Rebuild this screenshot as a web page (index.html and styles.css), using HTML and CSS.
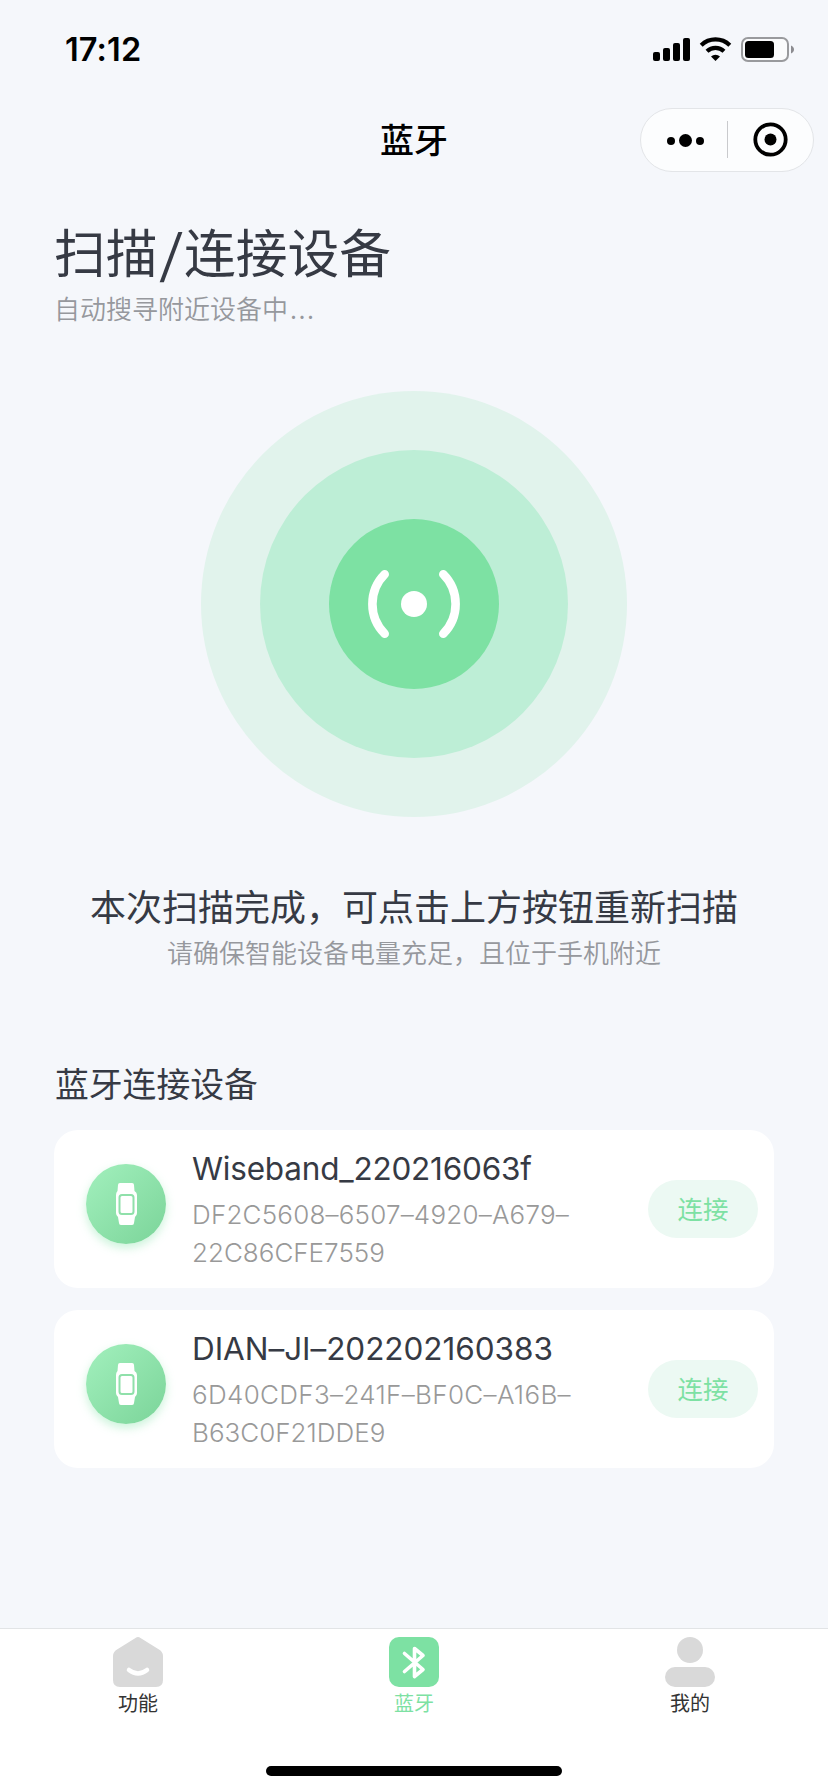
FILE: index.html
```html
<!DOCTYPE html>
<html lang="zh-CN">
<head>
<meta charset="utf-8">
<title>蓝牙</title>
<link rel="stylesheet" href="styles.css">
</head>
<body>
<div class="screen">
  <header class="status">
    <span class="clock">17:12</span>
    <svg class="status-icons" width="142" height="26" viewBox="0 0 142 26">
      <rect x="0" y="15" width="7" height="9" rx="2"/>
      <rect x="10" y="11" width="7" height="13" rx="2"/>
      <rect x="20" y="6" width="7" height="18" rx="2"/>
      <rect x="30" y="1" width="7" height="23" rx="2"/>
      <g fill="none" stroke="#000" stroke-width="4.2">
        <path d="M48.2 8.2a20.6 20.6 0 0 1 28.6 0"/>
        <path d="M54 14.2a12.4 12.4 0 0 1 17 0"/>
      </g>
      <path d="M58 19.6a6.6 6.6 0 0 1 9 0L62.500 24z"/>
      <rect x="89" y="1" width="46" height="23" rx="6" fill="#fafbfc" stroke="#999a9d" stroke-width="2"/>
      <rect x="92" y="4" width="29" height="17" rx="3.500"/>
      <path d="M138 8.500c4 1.500 4 6.500 0 8z" fill="#8c8c90"/>
    </svg>
  </header>
  <nav class="nav">
    <h1 class="nav-title">蓝牙</h1>
    <div class="capsule">
      <svg width="172" height="62" viewBox="0 0 172 62">
        <circle cx="30" cy="32" r="4"/><circle cx="44.500" cy="31.500" r="6.500"/><circle cx="59" cy="32" r="4"/>
        <rect x="86" y="12" width="1" height="37" fill="#c9cacd"/>
        <circle cx="129.500" cy="30.500" r="15.200" fill="none" stroke="#000" stroke-width="3.800"/>
        <circle cx="129.500" cy="30.500" r="6"/>
      </svg>
    </div>
  </nav>
  <main class="content">
    <h2 class="title">扫描<span class="slash">/</span>连接设备</h2>
    <p class="subtitle">自动搜寻附近设备中<span class="dots">...</span></p>
    <div class="radar">
      <div class="ring">
        <div class="core">
          <svg width="96" height="72" viewBox="0 0 96 72">
            <g fill="none" stroke="#fff" stroke-width="8.600" stroke-linecap="round">
              <path d="M18.700 6.300a42 42 0 0 0 0 59.400"/>
              <path d="M77.300 6.300a42 42 0 0 1 0 59.400"/>
            </g>
            <circle cx="48" cy="36" r="13" fill="#fff"/>
          </svg>
        </div>
      </div>
    </div>
    <p class="message">本次扫描完成，可点击上方按钮重新扫描</p>
    <p class="hint">请确保智能设备电量充足，且位于手机附近</p>
    <h3 class="section">蓝牙连接设备</h3>
    <ul class="devices">
      <li class="card">
        <span class="badge"><svg width="22" height="42" viewBox="0 0 22 42"><path fill="#fff" d="M5 0h12a2 2 0 0 1 2 2l.5 6Q22 9.500 22 12v18q0 2.500-2 4l-1 6a2 2 0 0 1-2 2H6a2 2 0 0 1-2-2l-1-6q-2-1.500-2-4V12q0-2.500 1.500-4L3 2a2 2 0 0 1 2-2z"/><rect x="4.500" y="12" width="14" height="19" rx="2.500" fill="#fff" stroke="#8fe0aa" stroke-width="2"/></svg></span>
        <div class="info">
          <p class="name name-a">Wiseband_220216063f</p>
          <p class="id id-a">DF2C5608–6507–4920–A679–<br>22C86CFE7559</p>
        </div>
        <button class="connect">连接</button>
      </li>
      <li class="card">
        <span class="badge"><svg width="22" height="42" viewBox="0 0 22 42"><path fill="#fff" d="M5 0h12a2 2 0 0 1 2 2l.5 6Q22 9.500 22 12v18q0 2.500-2 4l-1 6a2 2 0 0 1-2 2H6a2 2 0 0 1-2-2l-1-6q-2-1.500-2-4V12q0-2.500 1.500-4L3 2a2 2 0 0 1 2-2z"/><rect x="4.500" y="12" width="14" height="19" rx="2.500" fill="#fff" stroke="#8fe0aa" stroke-width="2"/></svg></span>
        <div class="info">
          <p class="name name-b">DIAN–JI–202202160383</p>
          <p class="id id-b">6D40CDF3–241F–BF0C–A16B–<br>B63C0F21DDE9</p>
        </div>
        <button class="connect">连接</button>
      </li>
    </ul>
  </main>
  <footer class="tabbar">
    <div class="tabs">
      <a class="tab">
        <svg width="50" height="50" viewBox="0 0 50 50"><path fill="#d9d9d9" d="M22.500 1Q25-.8 27.500 1L46 12.500Q50 15 50 19V43q0 7-7 7H7q-7 0-7-7V19q0-4 4-6.500z"/><path d="M16 33q9 7 18 0" fill="none" stroke="#fff" stroke-width="4.500" stroke-linecap="round"/></svg>
        <span>功能</span>
      </a>
      <a class="tab active">
        <svg width="50" height="50" viewBox="0 0 50 50"><rect width="50" height="50" rx="10" fill="#7de1a3"/><path d="M15.500 16.500 34 32.500 25.500 39.500V11.500L34 18.500 15.500 34.500" fill="none" stroke="#fff" stroke-width="3.600" stroke-linecap="round" stroke-linejoin="round"/></svg>
        <span>蓝牙</span>
      </a>
      <a class="tab">
        <svg width="50" height="50" viewBox="0 0 50 50" fill="#d9d9d9"><circle cx="25" cy="13" r="13"/><rect y="30" width="50" height="20" rx="10"/></svg>
        <span>我的</span>
      </a>
    </div>
    <div class="home"></div>
  </footer>
</div>
</body>
</html>
```
FILE: styles.css
```css
* { box-sizing: border-box; margin: 0; padding: 0; }
body {
  background: #f5f7fb;
  font-family: Inter, "Noto Sans CJK SC", sans-serif;
  color: #363a44;
}
.screen { width: 828px; height: 1792px; display: flex; flex-direction: column; }
.status {
  height: 88px;
  padding: 0 33px 0 65px;
  display: flex;
  align-items: flex-start;
  justify-content: space-between;
  color: #000;
}
.clock { font-size: 32.500px; line-height: 40px; margin-top: 30px; font-weight: 600; letter-spacing: 0.1px; }
.status-icons { margin-top: 37px; }
.nav {
  height: 104px;
  padding: 20px 14px 0;
  display: grid;
  grid-template-columns: 1fr 100px 1fr;
}
.nav-title {
  grid-column: 2;
  text-align: center;
  font-size: 34px;
  line-height: 65px;
  font-weight: 500;
  color: #000;
}
.capsule {
  justify-self: end;
  width: 174px;
  height: 64px;
  border: 1px solid #e3e5e8;
  border-radius: 32px;
  background: #fcfdfe;
}
.capsule svg, .badge svg, .core svg, .tab svg { display: block; }
.content { flex: 1; padding: 0 54px; display: flex; flex-direction: column; }
.title {
  margin-top: 22px;
  height: 74px;
  font: 400 51.750px/74px "Noto Sans CJK SC", sans-serif;
  white-space: nowrap;
}
.slash { display: inline-block; width: 26.500px; text-align: center; transform: scaleX(1.2); }
.subtitle { font: 350 26px/40px "Noto Sans CJK SC", sans-serif; height: 38px; color: #96989d; }
.dots { letter-spacing: 1.500px; margin-left: 2px; }
.radar {
  align-self: center;
  margin-top: 65px;
  width: 426px;
  height: 426px;
  border-radius: 50%;
  background: #e1f3ec;
  display: grid;
  place-items: center;
}
.ring { width: 308px; height: 308px; border-radius: 50%; background: #bdeed6; display: grid; place-items: center; }
.core { width: 170px; height: 170px; border-radius: 50%; background: #7de1a3; display: grid; place-items: center; }
.message { margin-top: 65px; text-align: center; font-size: 36px; line-height: 52px; white-space: nowrap; }
.hint { text-align: center; font-size: 26px; line-height: 40px; font-weight: 350; color: #96989d; }
.section { margin-top: 86px; padding-left: 1px; font-size: 33.800px; line-height: 50px; font-weight: 400; }
.devices { margin-top: 20px; list-style: none; display: grid; gap: 22px; }
.card {
  height: 158px;
  padding: 0 16px 0 32px;
  border-radius: 24px;
  background: #fff;
  display: flex;
  align-items: flex-start;
}
.badge {
  width: 80px;
  height: 80px;
  margin-top: 34px;
  border-radius: 50%;
  background: linear-gradient(135deg, #a2f0bd, #7bd499);
  box-shadow: 0 4px 10px rgba(125, 225, 163, 0.4);
  display: grid;
  place-items: center;
}
.info { flex: 1; margin-left: 26px; padding-top: 18px; white-space: nowrap; }
.name { font-size: 31.500px; line-height: 42px; font-weight: 400; }
.name-a { letter-spacing: -0.2px; }
.name-b { letter-spacing: -0.05px; }
.id { font-size: 26px; line-height: 38px; margin-top: 6px; font-weight: 350; color: #999; }
.id-a::first-line { letter-spacing: 0.2px; }
.id-b::first-line { letter-spacing: 0.33px; }
.connect {
  width: 110px;
  height: 58px;
  margin-top: 50px;
  border: 0;
  border-radius: 29px;
  background: #ecf9f3;
  color: #7de1a3;
  padding-bottom: 3px;
  font: 400 25.500px/50px "Noto Sans CJK SC", sans-serif;
}
.tabbar { height: 164px; border-top: 1px solid #e2e4e6; background: #fff; }
.tabs { display: grid; grid-template-columns: repeat(3, 1fr); height: 137px; }
.tab {
  display: flex;
  flex-direction: column;
  align-items: center;
  padding-top: 8px;
  font-size: 20px;
  line-height: 30px;
  color: #333;
}
.tab span { margin-top: 2px; }
.tab.active { color: #7de1a3; }
.home { width: 296px; height: 10px; margin: 0 auto; border-radius: 5px; background: #000; }
```
